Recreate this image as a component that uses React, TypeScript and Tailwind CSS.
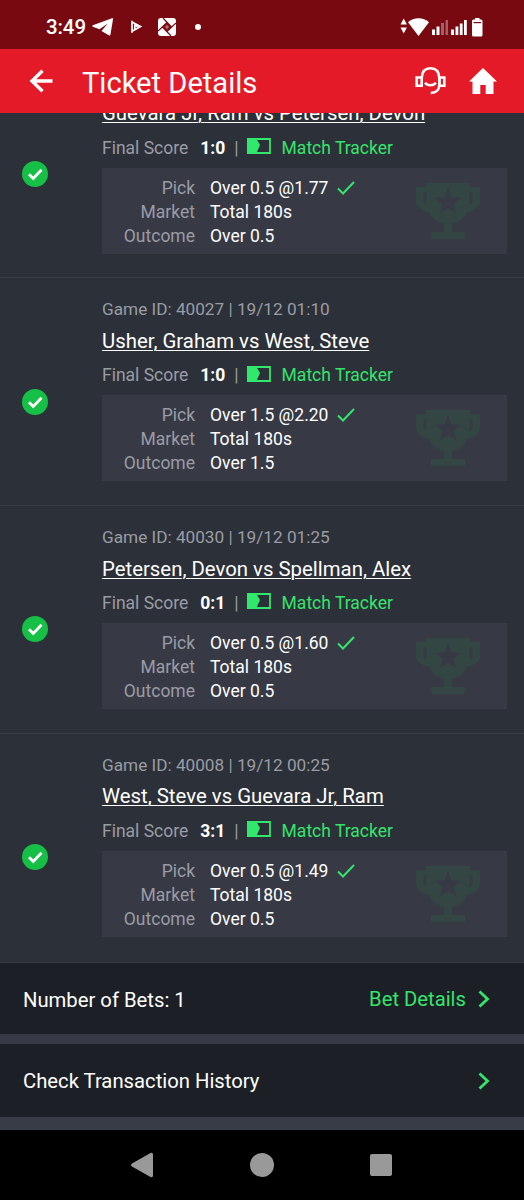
type Bet = {
  gameId?: string;
  date?: string;
  teams: string;
  score: string;
  line: string;
  odds: string;
};

const bets: Bet[] = [
  { teams: 'Guevara Jr, Ram vs Petersen, Devon', score: '1:0', line: 'Over 0.5', odds: '1.77' },
  { gameId: '40027', date: '19/12 01:10', teams: 'Usher, Graham vs West, Steve', score: '1:0', line: 'Over 1.5', odds: '2.20' },
  { gameId: '40030', date: '19/12 01:25', teams: 'Petersen, Devon vs Spellman, Alex', score: '0:1', line: 'Over 0.5', odds: '1.60' },
  { gameId: '40008', date: '19/12 00:25', teams: 'West, Steve vs Guevara Jr, Ram', score: '3:1', line: 'Over 0.5', odds: '1.49' },
];

function StatusBar() {
  return (
    <div className="flex h-[49px] shrink-0 items-center bg-[#780911] pt-1 pl-[46px] pr-[40px] text-white">
      <span className="w-[46px] text-[20.500px] leading-6 font-medium tracking-[-0.1px]">3:49</span>
      <svg className="h-[20px] w-[22px]" viewBox="0 0 22 20" fill="currentColor">
        <path d="M.8 8.300 20 1.300c.8-.2 1.200.2 1 1L18.500 17.500c-.2 1-.9 1.300-1.700.7L9.500 14l6.300-7.500-8.300 5.700L.8 9.800c-.6-.4-.6-1.200 0-1.500Z" />
      </svg>
      <svg className="ml-[16px] h-[14px] w-[13px]" viewBox="0 0 13 14" fill="none" stroke="currentColor" strokeWidth="1.700">
        <path d="M2 .8v12M1.500 1.800 10.500 6.500l-8 4.500M4.800 4.500v5M5 5l3 1.800" />
      </svg>
      <svg className="ml-[15px] h-[18px] w-[18px]" viewBox="0 0 18 18">
        <rect width="18" height="18" rx="3" fill="#fff" />
        <path d="m9 4.500 4.500 4.500L9 13.500 4.500 9Z" fill="#780911" />
        <path d="m5 0 8.500 9M18 5l-9 8.500M13 18 4.500 9M0 13l9-8.500" stroke="#780911" strokeWidth="1.200" />
        <path d="M9 6.800v4.400M6.800 9h4.400" stroke="#c9888c" strokeWidth="1" />
      </svg>
      <span className="ml-[19px] h-[6px] w-[6px] rounded-full bg-white" />
      <svg className="ml-auto h-[20px] w-[84px]" viewBox="0 0 84 20" fill="currentColor">
        <path d="m3.700 1.500 3.200 6H.5ZM3.700 16.500l-3.200-6h6.400Z" />
        <path d="M8 5.200C13.500-.2 23.500-.2 29 5.200L18.500 19Z" />
        <path d="M32 12.500h3V18h-3ZM36.500 9.500h3V18h-3Z" />
        <path d="M41 6h3v12h-3ZM45.500 3h2.500v15h-2.500Z" opacity=".35" />
        <path d="M51 12.500h3V18h-3ZM55.500 9.500h2.800V18h-2.800ZM59.800 6.500h2.800V18h-2.800ZM64 3h2.800v15H64Z" />
        <path d="M75 1h4.500v1.500H81q1.500 0 1.500 1.500v14q0 1.500-1.500 1.500h-7.500q-1.500 0-1.500-1.500V4q0-1.500 1.500-1.500H75Z" />
        <path d="M73.500 5h7.500v1.200h-7.500Z" fill="#780911" />
      </svg>
    </div>
  );
}

function Header() {
  return (
    <header className="flex h-[64px] shrink-0 items-center bg-[#e51a28] pl-[29px] pr-[27px] text-white">
      <svg className="h-[24px] w-[24px]" viewBox="0 0 24 24" fill="none" stroke="currentColor" strokeWidth="3.400">
        <path d="M13.500 1.800 3 12l10.500 10.200M3 12h20.500" />
      </svg>
      <h1 className="ml-[29px] pt-[3px] text-[29.100px] leading-9">Ticket Details</h1>
      <svg className="ml-auto h-[30px] w-[31px]" viewBox="0 0 31 30" fill="none" stroke="currentColor" strokeWidth="2.600">
        <path d="M1.700 11.500h5v8.200h-5ZM24.300 11.500h5v8.200h-5Z" />
        <path d="M6.700 12C7 5.500 10.500 2.300 15.500 2.300s8.500 3.200 8.800 9.700v7c0 5-3.300 8-8.600 8" />
        <path d="M10 16.800c2.500 3.200 8 3.200 11 0" />
      </svg>
      <svg className="ml-[23px] h-[26px] w-[28px]" viewBox="0 0 28 26" fill="currentColor">
        <path d="M14 0 28 13.500h-3.500V26h-7.800v-9h-5.400v9H3.500V13.500H0Z" />
      </svg>
    </header>
  );
}

function Trophy() {
  return (
    <svg className="h-[57px] w-[64px]" viewBox="0 0 64 57" fill="#334643">
      <path
        fillRule="evenodd"
        d="M10 0h44v4h10v13c0 6-4 10-13 12-3 7-8 10-15 12v8h13v7H15v-7h13v-8c-7-2-12-5-15-12C4 27 0 23 0 17V4h10ZM7.500 9v8c0 3 .5 3 3 4V9ZM56.500 9h-3v12c2.500-1 3-1 3-4ZM32 5l-3.400 9.500-10 .2 8 6-3 9.800 8.400-5.800 8.400 5.800-3-9.800 8-6-10-.2Z"
      />
    </svg>
  );
}

function BetCard({ bet }: { bet: Bet }) {
  return (
    <section className="flex h-[227.670px] shrink-0 border-t border-[#393d47] pr-[17px]">
      <div className="flex w-[102px] items-center pt-[20px] pl-[22px]">
        <svg className="h-[26px] w-[26px]" viewBox="0 0 26 26" fill="none">
          <circle cx="13" cy="13" r="13" fill="#16bf46" />
          <path d="m7 13.200 4.300 4.300 8.200-8.800" stroke="#fff" strokeWidth="2.800" />
        </svg>
      </div>
      <div className="flex-1 pt-[18px] text-[17.500px] text-[#9a9ca5]">
        <p className="h-[26px] text-[17.200px] leading-[26px]">{bet.gameId && `Game ID: ${bet.gameId} | ${bet.date}`}</p>
        <p className="mt-[4.600px] h-[28px] text-[20.380px] leading-[28px] text-white underline decoration-1 underline-offset-[2px]">{bet.teams}</p>
        <div className="mt-[8.400px] flex h-[24px] items-center">
          <span>Final Score</span>
          <span className="ml-[12px] font-bold text-white">{bet.score}</span>
          <span className="ml-[9px]">|</span>
          <svg className="ml-[8px] mb-[3px] h-[16px] w-[24px]" viewBox="0 0 24 16" fill="none">
            <path d="M1 1h22v14H1Z" stroke="#30e86b" strokeWidth="1.800" />
            <path d="M0 0h9l4 7-4 9H0Z" fill="#30e86b" />
          </svg>
          <span className="ml-[11px] text-[#36e46c]">Match Tracker</span>
        </div>
        <div className="mt-[8px] flex h-[86px] justify-between bg-[#373a45] pt-[8px] pr-[27px] leading-[24px]">
          <div className="grid h-[72px] grid-cols-[93px_auto] gap-x-[15px] text-white">
            <span className="text-right text-[#9a9ca5]">Pick</span>
            <span className="flex items-center">
              {bet.line} @{bet.odds}
              <svg className="ml-[9px] h-[14px] w-[18px]" viewBox="0 0 18 14" fill="none">
                <path d="m1 7.500 5 5L17 1" stroke="#36e46c" strokeWidth="2" />
              </svg>
            </span>
            <span className="text-right text-[#9a9ca5]">Market</span>
            <span>Total 180s</span>
            <span className="text-right text-[#9a9ca5]">Outcome</span>
            <span>{bet.line}</span>
          </div>
          <div className="pt-[7px]">
            <Trophy />
          </div>
        </div>
      </div>
    </section>
  );
}

function Chevron() {
  return (
    <svg className="h-[18px] w-[12px]" viewBox="0 0 12 18" fill="none">
      <path d="m1.500 1.500 8 7.500-8 7.500" stroke="#36e46c" strokeWidth="2.800" />
    </svg>
  );
}

function NavBar() {
  return (
    <nav className="flex h-[70px] shrink-0 items-center bg-black pl-[131px] text-[#999]">
      <svg className="h-[26px] w-[22px]" viewBox="0 0 22 26" fill="currentColor">
        <path d="M1 11.500 19.500 1q2.500-1 2.500 1.500v21q0 2.500-2.500 1.500L1 14.500q-2-1.500 0-3Z" />
      </svg>
      <span className="ml-[97px] h-[24px] w-[24px] rounded-full bg-[#999]" />
      <span className="ml-[96px] h-[22px] w-[22px] rounded-[2px] bg-[#999]" />
    </nav>
  );
}

export default function App() {
  return (
    <div className="flex h-[1200px] w-[524px] flex-col overflow-hidden bg-[#2c3038] font-['Roboto',sans-serif]">
      <StatusBar />
      <Header />
      <main className="flex h-[849px] shrink-0 flex-col justify-end overflow-hidden pb-[1.700px]">
        {bets.map((bet) => (
          <BetCard key={bet.teams} bet={bet} />
        ))}
      </main>
      <div className="flex h-[72px] shrink-0 items-center justify-between border-t border-[#373a43] bg-[#1c1f26] pl-[23px] pr-[34px] text-[20.250px] text-white">
        <span className="pt-[3px]">Number of Bets: 1</span>
        <span className="flex items-center gap-[12px] text-[#36e46c]">
          <span className="pt-[1px]">Bet Details</span>
          <Chevron />
        </span>
      </div>
      <div className="h-[10px] shrink-0 bg-[#373a46]" />
      <div className="flex h-[73px] shrink-0 items-center justify-between bg-[#1c1f26] pl-[23px] pr-[34px] text-[20.250px] text-white">
        <span className="pt-[2px]">Check Transaction History</span>
        <Chevron />
      </div>
      <div className="h-[13px] shrink-0 bg-[#373c46]" />
      <NavBar />
    </div>
  );
}
